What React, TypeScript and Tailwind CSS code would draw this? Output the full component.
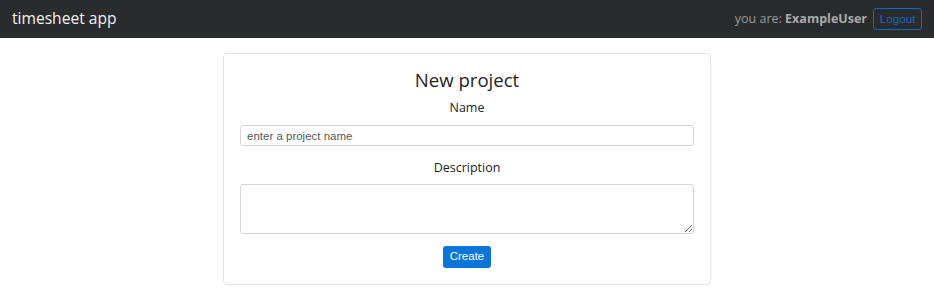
export default function App() {
  return (
    <div className="min-h-screen bg-white font-['Open_Sans',sans-serif]">
      <nav className="flex h-[38px] items-center justify-between bg-[#292b2c] pl-3 pr-3">
        <span className="text-[15.6px] text-[#f2f2f2]">timesheet app</span>
        <div className="flex items-center gap-[6px]">
          <span className="text-[12.5px] text-[#9a9b9c]">
            you are: <b className="font-bold text-[#a9aaab]">ExampleUser</b>
          </span>
          <button className="h-[22px] w-[49px] rounded-[3px] border border-[#0c6bc4] font-['Liberation_Sans',sans-serif] text-[11.7px] text-[#0c6bc4]">
            Logout
          </button>
        </div>
      </nav>
      <div className="mx-auto mt-[15px] flex w-[488px] flex-col items-center rounded-[4px] border border-[#e3e3e3] px-4 pt-[12px] pb-[16px]">
        <h1 className="text-[18.6px] leading-[27px] text-[#212529]">New project</h1>
        <label className="mt-[5px] text-[12.5px] leading-[20px] text-[#212529]">Name</label>
        <input
          className="mt-[7px] h-[21px] w-full rounded-[3px] border border-[#d6d6d6] px-[6px] font-['Liberation_Sans',sans-serif] text-[11.5px] text-[#495057] placeholder:text-[#55595c] outline-none"
          placeholder="enter a project name"
        />
        <label className="mt-[12px] text-[12.5px] leading-[20px] text-[#212529]">Description</label>
        <textarea className="mt-[6px] block h-[50px] w-full rounded-[3px] border border-[#d6d6d6] outline-none" />
        <button className="mt-[12px] h-[22px] w-[48px] rounded-[3px] bg-[#0a74d9] font-['Liberation_Sans',sans-serif] text-[11.5px] text-white">
          Create
        </button>
      </div>
    </div>
  );
}
